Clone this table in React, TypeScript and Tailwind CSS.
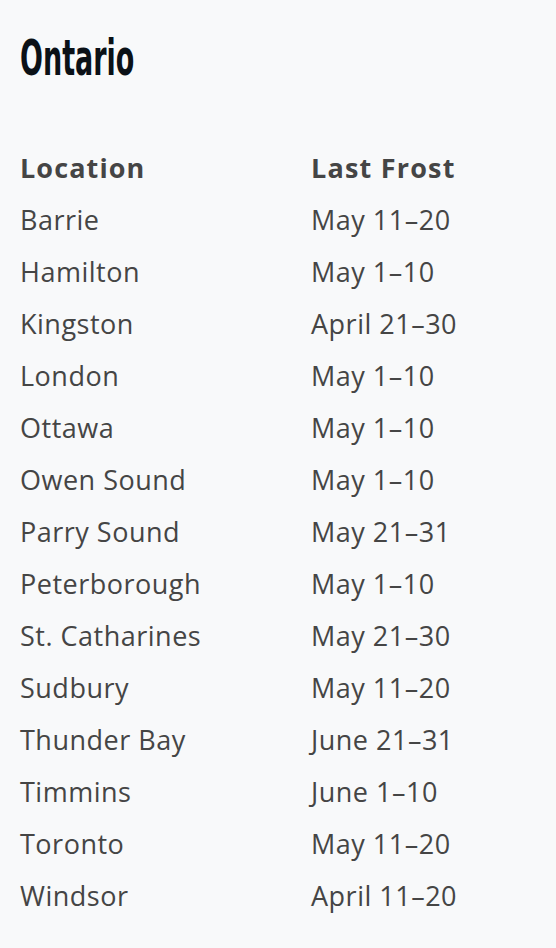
import React from "react";

const rows: [string, string][] = [
  ["Barrie", "May 11–20"],
  ["Hamilton", "May 1–10"],
  ["Kingston", "April 21–30"],
  ["London", "May 1–10"],
  ["Ottawa", "May 1–10"],
  ["Owen Sound", "May 1–10"],
  ["Parry Sound", "May 21–31"],
  ["Peterborough", "May 1–10"],
  ["St. Catharines", "May 21–30"],
  ["Sudbury", "May 11–20"],
  ["Thunder Bay", "June 21–31"],
  ["Timmins", "June 1–10"],
  ["Toronto", "May 11–20"],
  ["Windsor", "April 11–20"],
];

export default function App() {
  return (
    <div className="min-h-[948px] w-[556px] bg-[#f8f9fa] px-[20px] pt-[30px]">
      <h1
        className="origin-left scale-x-[0.6] text-[50px] font-bold leading-[56px] text-[#0b1117]"
        style={{ fontFamily: '"DejaVu Sans Condensed", "DejaVu Sans", sans-serif' }}
      >
        Ontario
      </h1>
      <div
        className="mt-[56px] grid grid-cols-[291px_1fr] text-[27px] leading-[52px] tracking-[0.5px] text-[#454545]"
        style={{ fontFamily: '"Open Sans", sans-serif' }}
      >
        <div className="font-bold tracking-[1.1px]">Location</div>
        <div className="font-bold tracking-[1.2px]">Last Frost</div>
        {rows.map(([a, b]) => (
          <React.Fragment key={a}>
            <div>{a}</div>
            <div>{b}</div>
          </React.Fragment>
        ))}
      </div>
    </div>
  );
}
